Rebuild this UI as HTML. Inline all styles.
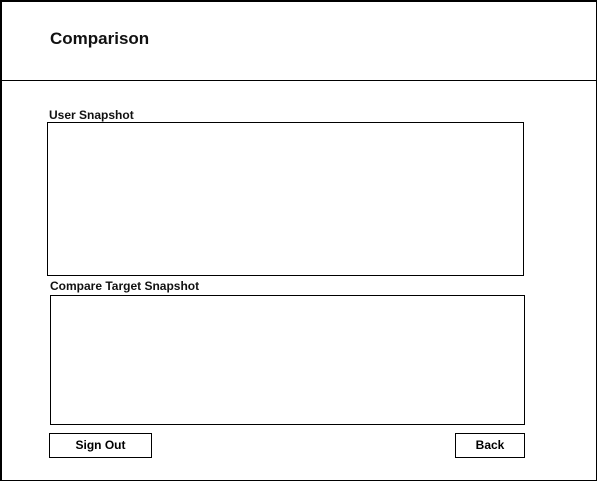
<!DOCTYPE html>
<html><head><style>
body{margin:0;width:600px;height:484px;background:#fff;position:relative;font-family:"Liberation Sans",sans-serif;overflow:hidden}
div{position:absolute;box-sizing:border-box}
.b{border:1px solid #000}
.t{font-weight:bold;font-size:12px;color:#111;white-space:nowrap}
.btn{border:1px solid #000;font-weight:bold;font-size:12px;text-align:center;line-height:22px}
</style></head><body>
<div style="left:0;top:0;width:597px;height:481px;border:1px solid #000;border-top-width:2px;border-left-width:2px"></div>
<div style="left:0;top:80px;width:597px;height:1px;background:#000"></div>
<div class="t" style="left:50px;top:29px;font-size:17px">Comparison</div>
<div class="t" style="left:49px;top:108px">User Snapshot</div>
<div class="b" style="left:47px;top:122px;width:477px;height:154px"></div>
<div class="t" style="left:50px;top:279px">Compare Target Snapshot</div>
<div class="b" style="left:50px;top:295px;width:475px;height:130px"></div>
<div class="btn" style="left:49px;top:433px;width:103px;height:25px">Sign Out</div>
<div class="btn" style="left:455px;top:433px;width:70px;height:25px">Back</div>
</body></html>
